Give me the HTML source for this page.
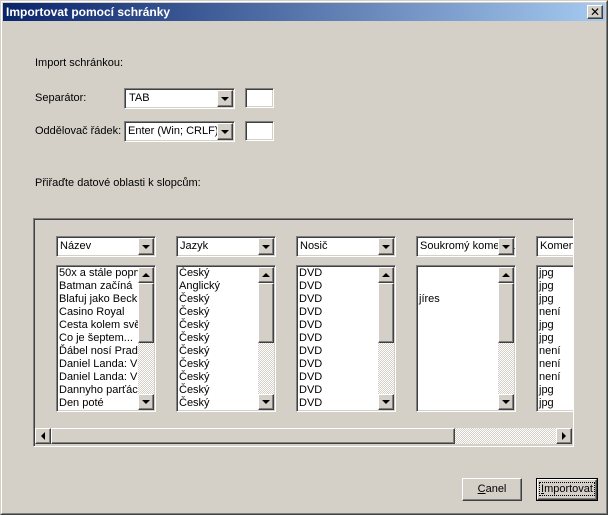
<!DOCTYPE html>
<html><head><meta charset="utf-8"><style>
*{box-sizing:border-box;margin:0;padding:0}
body{width:608px;height:515px;background:#d4d0c8;font-family:"Liberation Sans","DejaVu Sans",sans-serif;font-size:11px;color:#000;position:relative;overflow:hidden}
.a{position:absolute}
.win{left:0;top:0;width:608px;height:515px;border-top:1px solid #d4d0c8;border-left:1px solid #d4d0c8;border-right:1px solid #404040;border-bottom:1px solid #404040}
.win2{left:1px;top:1px;width:606px;height:513px;border-top:1px solid #fff;border-left:1px solid #fff;border-right:1px solid #808080;border-bottom:1px solid #808080}
.title{left:3px;top:3px;width:602px;height:18px;background:linear-gradient(90deg,#0a246a,#a6caf0);color:#fff;font-weight:bold;font-size:12px;line-height:18px;padding-left:3px}
.btn{background:#d4d0c8;border-top:1px solid #fff;border-left:1px solid #fff;border-right:1px solid #404040;border-bottom:1px solid #404040;box-shadow:inset -1px -1px 0 #808080}
.sunk{background:#fff;border-top:1px solid #808080;border-left:1px solid #808080;border-right:1px solid #fff;border-bottom:1px solid #fff;box-shadow:inset 1px 1px 0 #404040,inset -1px -1px 0 #d4d0c8}
.arr{display:flex;align-items:center;justify-content:center}
.dn::after{content:"";border-left:4px solid transparent;border-right:4px solid transparent;border-top:4px solid #000}
.up::after{content:"";border-left:4px solid transparent;border-right:4px solid transparent;border-bottom:4px solid #000}
.lt::after{content:"";border-top:4px solid transparent;border-bottom:4px solid transparent;border-right:4px solid #000}
.rt::after{content:"";border-top:4px solid transparent;border-bottom:4px solid transparent;border-left:4px solid #000}
.hatch{background:repeating-conic-gradient(#fff 0 25%,#d4d0c8 0 50%) 0 0/2px 2px}
.list{line-height:13px;padding:0 0 0 1px;overflow:hidden;white-space:nowrap}
.clip{position:absolute;left:1px;top:1px;width:80px;height:143px;overflow:hidden}
</style></head><body>
<div class="a win"></div><div class="a win2"></div>
<div class="a title">Importovat pomocí schránky</div>
<div class="a btn arr" style="left:587px;top:5px;width:16px;height:14px;font-size:12px;font-weight:bold">✕</div>

<div class="a" style="left:35px;top:57px">Import schránkou:</div>
<div class="a" style="left:35px;top:92px">Separátor:</div>
<div class="a sunk" style="left:124px;top:88px;width:111px;height:21px;padding:3px 0 0 4px">TAB</div>
<div class="a btn arr dn" style="left:217px;top:90px;width:16px;height:17px"></div>
<div class="a sunk" style="left:245px;top:88px;width:29px;height:20px"></div>
<div class="a" style="left:35px;top:125px">Oddělovač řádek:</div>
<div class="a sunk" style="left:124px;top:121px;width:111px;height:21px;padding:3px 0 0 3px;white-space:nowrap;overflow:hidden">Enter (Win; CRLF)</div>
<div class="a btn arr dn" style="left:217px;top:123px;width:16px;height:17px"></div>
<div class="a sunk" style="left:245px;top:121px;width:29px;height:20px"></div>
<div class="a" style="left:35px;top:177px">Přiřaďte datové oblasti k slopcům:</div>

<div class="a" style="left:33px;top:218px;width:541px;height:229px;border-top:1px solid #808080;border-left:1px solid #808080;border-right:1px solid #fff;border-bottom:1px solid #fff;box-shadow:inset 1px 1px 0 #404040;overflow:hidden">
<div class="a" style="left:0;top:0;width:539px;height:227px;overflow:hidden">
 <div class="a sunk" style="left:22px;top:17px;width:100px;height:21px;padding:3px 0 0 3px;overflow:hidden;white-space:nowrap">Název</div><div class="a btn arr dn" style="left:104px;top:19px;width:16px;height:17px"></div>
 <div class="a sunk" style="left:22px;top:46px;width:100px;height:147px"><div class="clip list">50x a stále poprvé<br>Batman začíná<br>Blafuj jako Beckham<br>Casino Royal<br>Cesta kolem světa<br>Co je šeptem...<br>Ďábel nosí Pradu<br>Daniel Landa: Vůně<br>Daniel Landa: Vlci<br>Dannyho parťáci<br>Den poté</div></div>
 <div class="a" style="left:104px;top:48px;width:16px;height:143px" ><div class="a btn arr up" style="left:0;top:0;width:16px;height:16px"></div><div class="a btn" style="left:0;top:16px;width:16px;height:60px"></div><div class="a hatch" style="left:0;top:76px;width:16px;height:51px"></div><div class="a btn arr dn" style="left:0;top:127px;width:16px;height:16px"></div></div>

 <div class="a sunk" style="left:142px;top:17px;width:100px;height:21px;padding:3px 0 0 3px">Jazyk</div><div class="a btn arr dn" style="left:224px;top:19px;width:16px;height:17px"></div>
 <div class="a sunk" style="left:142px;top:46px;width:100px;height:147px"><div class="clip list">Český<br>Anglický<br>Český<br>Český<br>Český<br>Český<br>Český<br>Český<br>Český<br>Český<br>Český</div></div>
 <div class="a" style="left:224px;top:48px;width:16px;height:143px"><div class="a btn arr up" style="left:0;top:0;width:16px;height:16px"></div><div class="a btn" style="left:0;top:16px;width:16px;height:60px"></div><div class="a hatch" style="left:0;top:76px;width:16px;height:51px"></div><div class="a btn arr dn" style="left:0;top:127px;width:16px;height:16px"></div></div>

 <div class="a sunk" style="left:262px;top:17px;width:100px;height:21px;padding:3px 0 0 3px">Nosič</div><div class="a btn arr dn" style="left:344px;top:19px;width:16px;height:17px"></div>
 <div class="a sunk" style="left:262px;top:46px;width:100px;height:147px"><div class="clip list">DVD<br>DVD<br>DVD<br>DVD<br>DVD<br>DVD<br>DVD<br>DVD<br>DVD<br>DVD<br>DVD</div></div>
 <div class="a" style="left:344px;top:48px;width:16px;height:143px"><div class="a btn arr up" style="left:0;top:0;width:16px;height:16px"></div><div class="a btn" style="left:0;top:16px;width:16px;height:60px"></div><div class="a hatch" style="left:0;top:76px;width:16px;height:51px"></div><div class="a btn arr dn" style="left:0;top:127px;width:16px;height:16px"></div></div>

 <div class="a sunk" style="left:382px;top:17px;width:100px;height:21px;padding:3px 0 0 3px;overflow:hidden;white-space:nowrap">Soukromý komentář</div><div class="a btn arr dn" style="left:464px;top:19px;width:16px;height:17px"></div>
 <div class="a sunk" style="left:382px;top:46px;width:100px;height:147px"><div class="clip list"><br><br>jíres</div></div>
 <div class="a" style="left:464px;top:48px;width:16px;height:143px"><div class="a btn arr up" style="left:0;top:0;width:16px;height:16px"></div><div class="a btn" style="left:0;top:16px;width:16px;height:60px"></div><div class="a hatch" style="left:0;top:76px;width:16px;height:51px"></div><div class="a btn arr dn" style="left:0;top:127px;width:16px;height:16px"></div></div>

 <div class="a sunk" style="left:502px;top:17px;width:100px;height:21px;padding:3px 0 0 3px">Komentář</div>
 <div class="a sunk" style="left:502px;top:46px;width:100px;height:147px"><div class="clip list">jpg<br>jpg<br>jpg<br>není<br>jpg<br>jpg<br>není<br>není<br>není<br>jpg<br>jpg</div></div>

 <div class="a hatch" style="left:1px;top:209px;width:537px;height:16px"></div>
 <div class="a btn arr lt" style="left:1px;top:209px;width:16px;height:16px"></div>
 <div class="a btn" style="left:17px;top:209px;width:404px;height:16px"></div>
 <div class="a btn arr rt" style="left:522px;top:209px;width:16px;height:16px"></div>
</div></div>

<div class="a btn" style="left:462px;top:478px;width:60px;height:23px;text-align:center;line-height:21px"><u>C</u>anel</div>
<div class="a" style="left:536px;top:478px;width:62px;height:23px;border:1px solid #000"><div class="a btn" style="left:0;top:0;width:60px;height:21px;text-align:center;line-height:19px"><span style="outline:1px dotted #000;padding:0 1px"><u>I</u>mportovat</span></div></div>
</body></html>
